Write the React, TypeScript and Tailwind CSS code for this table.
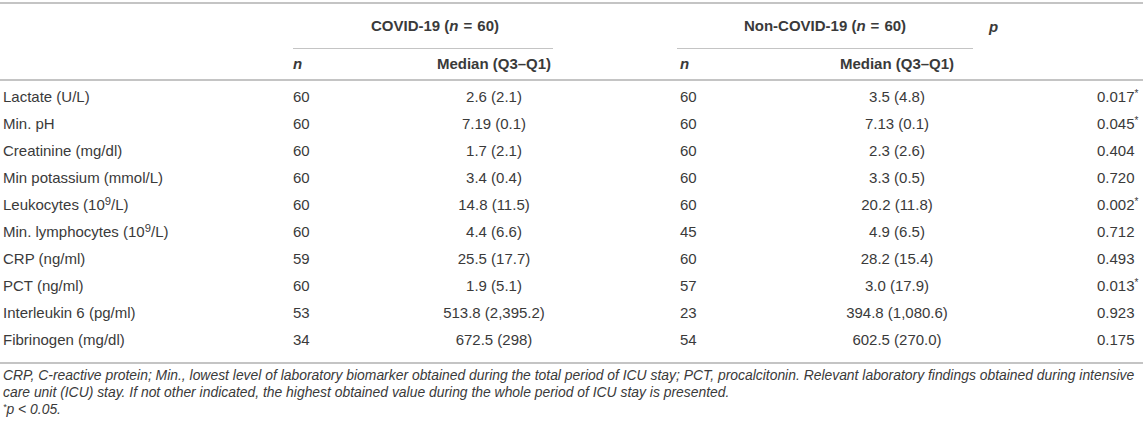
const rows: [React.ReactNode, string, string, string, string, string][] = [
  ['Lactate (U/L)', '60', '2.6 (2.1)', '60', '3.5 (4.8)', '0.017*'],
  ['Min. pH', '60', '7.19 (0.1)', '60', '7.13 (0.1)', '0.045*'],
  ['Creatinine (mg/dl)', '60', '1.7 (2.1)', '60', '2.3 (2.6)', '0.404'],
  ['Min potassium (mmol/L)', '60', '3.4 (0.4)', '60', '3.3 (0.5)', '0.720'],
  [<>Leukocytes (10<sup>9</sup>/L)</>, '60', '14.8 (11.5)', '60', '20.2 (11.8)', '0.002*'],
  [<>Min. lymphocytes (10<sup>9</sup>/L)</>, '60', '4.4 (6.6)', '45', '4.9 (6.5)', '0.712'],
  ['CRP (ng/ml)', '59', '25.5 (17.7)', '60', '28.2 (15.4)', '0.493'],
  ['PCT (ng/ml)', '60', '1.9 (5.1)', '57', '3.0 (17.9)', '0.013*'],
  ['Interleukin 6 (pg/ml)', '53', '513.8 (2,395.2)', '23', '394.8 (1,080.6)', '0.923'],
  ['Fibrinogen (mg/dl)', '34', '672.5 (298)', '54', '602.5 (270.0)', '0.175'],
];

const cols = 'grid grid-cols-[293px_142px_118px_124px_144px_152px_1fr]';

function PValue({ v }: { v: string }) {
  const star = v.endsWith('*');
  return (
    <span>
      {star ? v.slice(0, -1) : v}
      {star && <sup className="text-[10px]">*</sup>}
    </span>
  );
}

export default function App() {
  return (
    <div className="w-[1143px] h-[430px] bg-white text-[#3a3a3a] text-[15px] overflow-hidden" style={{ fontFamily: '"Liberation Sans", Arial, sans-serif' }}>
      <div className="mt-[2px] border-t-2 border-[#c4c4c4]">
        {/* header row 1 */}
        <div className={`${cols} h-[45px]`}>
          <div />
          <div className="col-span-2 flex items-center justify-center pl-[24px] pt-[1px] font-bold border-b border-[#c4c4c4]">
            COVID-19 (<i>n</i><span className="px-[5px]">=</span>60)
          </div>
          <div />
          <div className="col-span-2 flex items-center justify-center pt-[1px] font-bold border-b border-[#c4c4c4]">
            Non-COVID-19 (<i>n</i><span className="px-[5px]">=</span>60)
          </div>
          <div className="flex items-center pl-[16px] pt-[1px] font-bold italic">p</div>
        </div>
        {/* header row 2 */}
        <div className={`${cols} h-[32px] items-center font-bold border-b-2 border-[#c4c4c4]`}>
          <div />
          <div className="italic">n</div>
          <div className="text-center">Median (Q3–Q1)</div>
          <div />
          <div className="italic pl-[3px]">n</div>
          <div className="text-center">Median (Q3–Q1)</div>
          <div />
        </div>
        {/* body */}
        <div className="pt-[3px] pb-[8px] border-b-2 border-[#c4c4c4]">
          {rows.map((r, i) => (
            <div key={i} className={`${cols} h-[27px] items-center`}>
              <div className="pl-[3px]">{r[0]}</div>
              <div>{r[1]}</div>
              <div className="text-center">{r[2]}</div>
              <div />
              <div className="pl-[3px]">{r[3]}</div>
              <div className="text-center">{r[4]}</div>
              <div className="pl-[124px]"><PValue v={r[5]} /></div>
            </div>
          ))}
        </div>
      </div>
      <div className="pl-[3px] pt-[3px] text-[13.9px] leading-[17px] italic whitespace-nowrap">
        CRP, C-reactive protein; Min., lowest level of laboratory biomarker obtained during the total period of ICU stay; PCT, procalcitonin. Relevant laboratory findings obtained during intensive
        <br />
        care unit (ICU) stay. If not other indicated, the highest obtained value during the whole period of ICU stay is presented.
        <br />
        <sup className="text-[9px]">*</sup>
        <i>p</i> &lt; 0.05.
      </div>
    </div>
  );
}
